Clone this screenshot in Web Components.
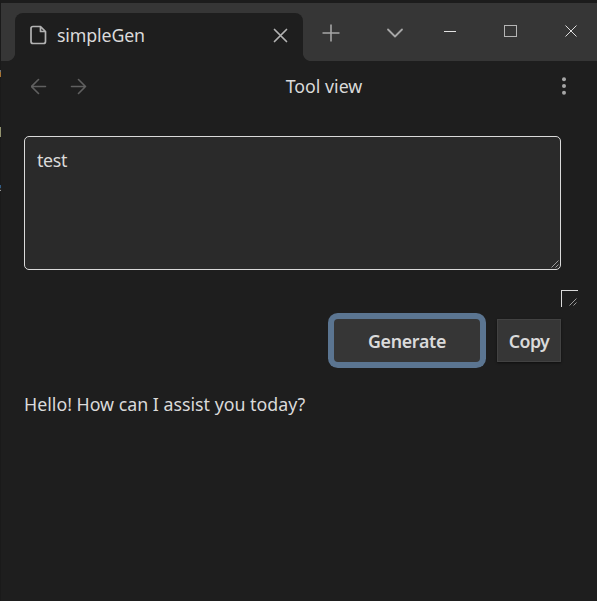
<!DOCTYPE html>
<html lang="en"><head><meta charset="utf-8"><title>simpleGen</title>
<style>
html,body{margin:0;height:100%;background:#1e1e1e;overflow:hidden}
body{font:17.8px/24px "Noto Sans","Open Sans",sans-serif;color:#dadada}
</style></head><body>
<app-window>
  <title-bar slot="title"><tab-item slot="tab">simpleGen</tab-item></title-bar>
  <view-header slot="header">Tool view</view-header>
  <prompt-box>test</prompt-box>
  <resize-corner></resize-corner>
  <action-row><action-button primary>Generate</action-button><action-button>Copy</action-button></action-row>
  <reply-text>Hello! How can I assist you today?</reply-text>
</app-window>
<script>
const define=(name,html)=>{
  const t=document.createElement('template');t.innerHTML=html;
  customElements.define(name,class extends HTMLElement{
    constructor(){super();this.attachShadow({mode:'open'}).append(t.content.cloneNode(true));}
  });
};
define('app-window',`<style>
:host{display:block;position:relative;box-sizing:border-box;width:597px;height:601px;border-top:3px solid #1c1c1c;border-left:1px solid #1a1a1a;background:#1e1e1e}
main{display:flex;flex-direction:column;padding:27px 36px 0 23px}
i{position:absolute;left:-1px;width:1px}
.a{top:67px;height:7px;background:linear-gradient(#777 2px,#a87332 2px)}
.b{top:124px;height:10px;background:#92936f}
.c{top:182px;height:6px;background:linear-gradient(#315c85 3px,#2b2b2b 3px 5px,#999 5px)}
</style><slot name="title"></slot><slot name="header"></slot><main><slot></slot></main><i class="a"></i><i class="b"></i><i class="c"></i>`);
define('title-bar',`<style>
:host{display:flex;height:58px;background:#363636;padding-left:14px;box-sizing:border-box;align-items:flex-end}
svg{display:block;flex:none;align-self:flex-start}
</style><slot name="tab"></slot>
<svg width="294" height="58" viewBox="303 3 294 58" fill="none" stroke="#a6a6a6">
<path d="M322.5 33H339.5M331 24.5V41.5" stroke-width="1.6"/>
<path d="M388 29.5L395 36.5L402 29.5" stroke-width="1.8" stroke-linecap="round" stroke-linejoin="round"/>
<path d="M444 31.5H456" stroke="#e2e2e2"/><rect x="504.5" y="25.5" width="12" height="11" stroke="#b5b5b5"/>
<path d="M565.5 25.5L576.5 36.5M576.5 25.5L565.5 36.5" stroke="#dedede"/></svg>`);
define('tab-item',`<style>
:host{display:flex;position:relative;box-sizing:border-box;width:288px;height:48px;border-radius:8px 8px 0 0;background:#1e1e1e;align-items:center;padding:0 15px 4px;flex:none}
:host::before,:host::after{content:"";position:absolute;bottom:0;width:8px;height:8px}
:host::before{left:-8px;background:radial-gradient(circle at 0 0,transparent 7.6px,#1e1e1e 8.4px)}
:host::after{right:-8px;background:radial-gradient(circle at 100% 0,transparent 7.6px,#1e1e1e 8.4px)}
span{flex:1;margin-left:10px;letter-spacing:-.15px}
svg{display:block}
</style><svg width="17" height="20" viewBox="0 0 17 20" fill="none" stroke="#b3b3b3" stroke-width="1.7" stroke-linejoin="round"><path d="M3 1.5H10.5L15.5 6.5V16.5Q15.5 18.5 13.5 18.5H3Q1 18.5 1 16.5V3.5Q1 1.5 3 1.5ZM10.5 1.5V6.5H15.5"/></svg>
<span><slot></slot></span><svg width="15" height="15" viewBox="0 0 15 15" stroke="#b3b3b3" stroke-width="1.7" stroke-linecap="round"><path d="M1.5 1.5L13.5 13.5M13.5 1.5L1.5 13.5"/></svg>`);
define('view-header',`<style>
:host{display:grid;grid-template-columns:1fr auto 1fr;align-items:center;height:48px;padding:0 23px 0 73px;box-sizing:border-box;color:#dadada}
span{letter-spacing:0;padding-top:2px}svg{display:block;margin-top:3px}.nav{margin-left:-43px}.dots{justify-self:end;margin-top:2px}
</style><svg class="nav" width="60" height="18" viewBox="31 78 60 18" fill="none" stroke="#606060" stroke-width="1.6" stroke-linecap="round" stroke-linejoin="round"><path d="M45.5 86.5H31.5M38.5 79.5L31.5 86.5L38.5 93.5M71.5 86.5H85.5M78.5 79.5L85.5 86.5L78.5 93.5"/></svg>
<span><slot></slot></span><svg class="dots" width="20" height="20" viewBox="0 0 20 20" fill="#a6a6a6"><circle cx="10" cy="3.3" r="2"/><circle cx="10" cy="10" r="2"/><circle cx="10" cy="16.7" r="2"/></svg>`);
define('prompt-box',`<style>
:host{display:flex;box-sizing:border-box;height:134px;border:1px solid #dadada;border-radius:5px;background:#2a2a2a;padding:11px 12px;justify-content:space-between;letter-spacing:-.35px}
svg{align-self:flex-end;margin:0 -12px -11px 0}
</style><span><slot></slot></span><svg width="9" height="9" viewBox="0 0 9 9" stroke="#bbb" stroke-width=".8"><path d="M.5 7.5L7.5 .5M4.5 7.5L7.5 4.5"/></svg>`);
define('resize-corner',`<style>
:host{display:flex;box-sizing:border-box;width:17px;height:17px;margin:20px -17px 0 auto;border:solid #dadada;border-width:1px 0 0 1px;align-items:flex-end;justify-content:flex-end}
</style><svg width="9" height="9" viewBox="0 0 9 9" stroke="#bbb" stroke-width=".8"><path d="M.5 7.5L7.5 .5M4.5 7.5L7.5 4.5"/></svg>`);
define('action-row',`<style>:host{display:flex;justify-content:flex-end;align-items:center;gap:17px;margin-top:12px}</style><slot></slot>`);
define('action-button',`<style>
:host{display:flex;box-sizing:border-box;width:64px;height:43px;align-items:center;justify-content:center;background:#363636;border:1px solid #424242;box-shadow:0 1px 2px #0008;font-weight:600;letter-spacing:-.55px}
:host([primary]){width:146px;border:0;border-radius:4px;box-shadow:0 0 0 6px #5b7591;letter-spacing:-.3px}
</style><span><slot></slot></span>`);
define('reply-text',`<style>:host{display:block;margin-top:30px;letter-spacing:0;white-space:nowrap}</style><slot></slot>`);
</script></body></html>
